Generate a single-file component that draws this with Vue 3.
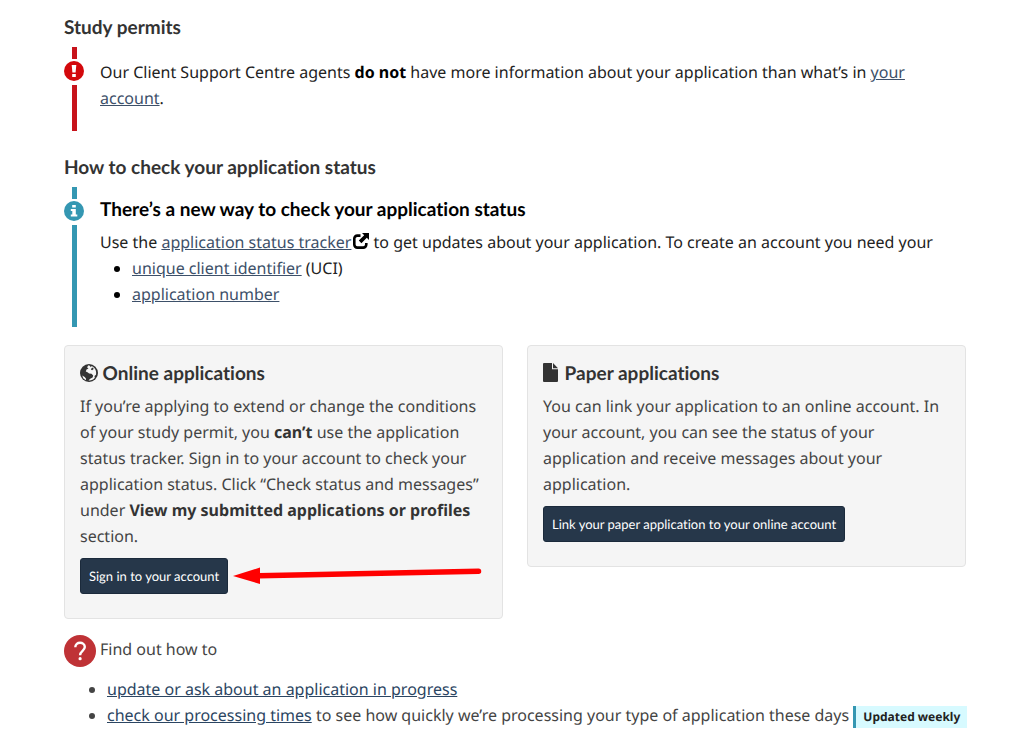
<script setup>
const headings = {
  permits: 'Study permits',
  status: 'How to check your application status',
}
</script>

<template>
  <main class="page">
    <h2 class="heading">{{ headings.permits }}</h2>
    <section class="alert danger">
      <div class="rail" aria-hidden="true">
        <span class="stub"></span>
        <svg class="mark" viewBox="0 0 20 20">
          <circle cx="10" cy="10" r="10" />
          <path fill="#fff" d="M7.700 4h4.600l-.7 7.400H8.400zM8.200 12.900h3.600v3H8.200z" />
        </svg>
        <span class="line"></span>
      </div>
      <p class="alert-body">
        Our Client Support Centre agents <strong>do not</strong> have more information about your application than what’s in <a href="#account">your account</a>.
      </p>
    </section>

    <h2 class="heading">{{ headings.status }}</h2>
    <section class="alert info">
      <div class="rail" aria-hidden="true">
        <span class="stub"></span>
        <svg class="mark" viewBox="0 0 20 20">
          <circle cx="10" cy="10" r="10" />
          <path fill="#fff" d="M8.200 4h3.600v2.600H8.200zM6.800 8h5v5.600h1.500v2H6.800v-2h1.500V10H6.800z" />
        </svg>
        <span class="line"></span>
      </div>
      <div class="alert-body">
        <h3 class="heading">There’s a new way to check your application status</h3>
        <p>
          Use the <a href="#tracker">application status tracker</a>
          <svg class="external" viewBox="0 0 16 16" aria-hidden="true">
            <path fill="none" stroke="#000" stroke-width="2.600" d="M7.500 2.600H4.300a3 3 0 0 0-3 3v6a3 3 0 0 0 3 3h6a3 3 0 0 0 3-3V10" />
            <path d="M9 0h7v7l-2.200-2.200-5.400 5.400-2.600-2.600 5.400-5.400z" />
          </svg>
          to get updates about your application. To create an account you need your
        </p>
        <ul class="list">
          <li><a href="#uci">unique client identifier</a> (UCI)</li>
          <li><a href="#number">application number</a></li>
        </ul>
      </div>
    </section>

    <div class="cards">
      <section class="card">
        <h3 class="heading">
          <svg class="globe" viewBox="0 0 18 18" aria-hidden="true">
            <circle cx="9" cy="9" r="9" fill="#333" />
            <path fill="#f5f5f5" d="M8.500 1.300 7 3.200l1.500 1.200-2 1.200-.7 2 1.700.6 1.600 1.200 2.400.3 1.700 1.800-.6 1.900-2.400 1.400-1.700 1.700c2.600.3 4.900-.7 6.300-2.700l-.3-1.800 1.500-1.300c.8-3.800-1-7-4.300-8.600l-.9 1.200-1-1.500zM2.300 11.500l.9 2.700 2.600 2 .3-1.500-1.400-1.800z" />
            <path fill="#333" d="m11.500 4.300 1.500-.9.7 1.500-1.600 1.300-1.200-.6z" />
          </svg>
          Online applications
        </h3>
        <p>
          If you’re applying to extend or change the conditions of your study permit, you <strong>can’t</strong> use the application status tracker. Sign in to your account to check your application status. Click “Check status and messages” under <strong>View my submitted applications or profiles</strong> section.
        </p>
        <div class="action">
          <button type="button">Sign in to your account</button>
          <svg class="arrow" viewBox="0 0 249 18" aria-hidden="true">
            <path fill="none" stroke="#f00" stroke-width="5.500" stroke-linecap="round" d="M26 8.700 245.500 4.200" />
            <path fill="#f00" d="M0 9 27 .5v16.500z" />
          </svg>
        </div>
      </section>
      <section class="card">
        <h3 class="heading">
          <svg class="file" viewBox="0 0 15 19" aria-hidden="true">
            <path fill="#333" d="M0 1a1 1 0 0 1 1-1h8v6.200h6V18a1 1 0 0 1-1 1H1a1 1 0 0 1-1-1zM10 0l5 5.200h-5z" />
          </svg>
          Paper applications
        </h3>
        <p>
          You can link your application to an online account. In your account, you can see the status of your application and receive messages about your application.
        </p>
        <div class="action">
          <button type="button">Link your paper application to your online account</button>
        </div>
      </section>
    </div>

    <div class="find">
      <svg class="question" viewBox="0 0 32 32" aria-hidden="true">
        <circle cx="16" cy="16" r="16" fill="#bf3236" />
        <path fill="none" stroke="#fff" stroke-width="2.400" d="M11.300 12.300c0-6.200 9.500-5.800 9.500-.3 0 3.700-4.700 4-4.700 8.200" />
        <circle cx="16.100" cy="23.700" r="1.600" fill="#fff" />
      </svg>
      <p>Find out how to</p>
    </div>
    <ul class="list more">
      <li><a href="#update">update or ask about an application in progress</a></li>
      <li>
        <a href="#times">check our processing times</a> to see how quickly we’re processing your type of application these days
        <span class="tag">Updated weekly</span>
      </li>
    </ul>
  </main>
</template>

<style>
body {
  margin: 0;
  background: #fff;
}
</style>

<style scoped>
.page {
  padding: 14px 58px 8px 64px;
  font: 16px/26px "Noto Sans", sans-serif;
  text-rendering: geometricPrecision;
  font-variant-ligatures: none;
  color: #444;
}
.heading,
p,
ul {
  margin: 0;
}
.heading {
  font-family: Lato, sans-serif;
  font-size: 19px;
  font-weight: 700;
  line-height: 28px;
  color: #333;
}
a {
  color: #3d5069;
  text-decoration: underline;
}
.alert {
  display: flex;
  gap: 16px;
  margin: 5px 0 23px;
  color: #222;
}
.alert.info {
  margin-bottom: 18px;
}
.alert strong,
.alert .heading {
  color: #000;
}
.alert .heading {
  margin-bottom: 5px;
}
.alert-body {
  flex: 1;
  padding: 9px 0 20px;
}
.danger .alert-body {
  padding: 12px 24px 20px 0;
}
.rail {
  display: flex;
  flex-direction: column;
  align-items: center;
  width: 20px;
}
.danger .rail {
  color: #c7131b;
}
.info .rail {
  color: #3497b2;
}
.stub,
.line {
  width: 5px;
  background: currentColor;
}
.stub {
  height: 12px;
}
.line {
  flex: 1;
}
.mark {
  width: 20px;
  height: 20px;
  margin: 2px 0 4px;
  fill: currentColor;
}
.danger .mark {
  color: #d3080c;
}
.external {
  width: 16px;
  height: 16px;
  margin-left: 2px;
  vertical-align: -1px;
}
.list {
  padding-left: 32px;
}
.alert li::marker {
  color: #000;
}
.cards {
  display: grid;
  grid-template-columns: 1fr 1fr;
  align-items: start;
  gap: 24px;
}
.card {
  padding: 14px 15px 24px;
  border: 1px solid #e3e3e3;
  border-radius: 4px;
  background: #f5f5f5;
}
.card .heading {
  margin-bottom: 5px;
}
.card strong {
  color: #333;
}
.globe {
  width: 18px;
  height: 18px;
  vertical-align: -2px;
}
.file {
  width: 15px;
  height: 19px;
  margin-right: 2px;
  vertical-align: -2px;
}
.action {
  display: flex;
  align-items: center;
  gap: 5px;
  margin-top: 9px;
}
button {
  flex: none;
  padding: 7px 8px;
  border: 1px solid #1b2a3b;
  border-radius: 3px;
  background: #26374a;
  color: #fff;
  font-family: Lato, sans-serif;
  font-size: 13px;
  line-height: 20px;
  font-variant-ligatures: none;
  text-rendering: geometricPrecision;
}
.arrow {
  width: 249px;
  height: 18px;
}
.find {
  display: flex;
  gap: 4px;
  margin-top: 16px;
}
.find p {
  line-height: 28px;
}
.question {
  width: 32px;
  height: 32px;
}
.more {
  margin: 9px -12px 0 0;
  padding-left: 43px;
}
.more a {
  color: #2b4562;
}
.tag {
  display: inline-block;
  padding: 0 7px;
  border-left: 3px solid #3497b2;
  background: #d7faff;
  color: #222;
  font-size: 12px;
  font-weight: 700;
  line-height: 22px;
}
</style>
